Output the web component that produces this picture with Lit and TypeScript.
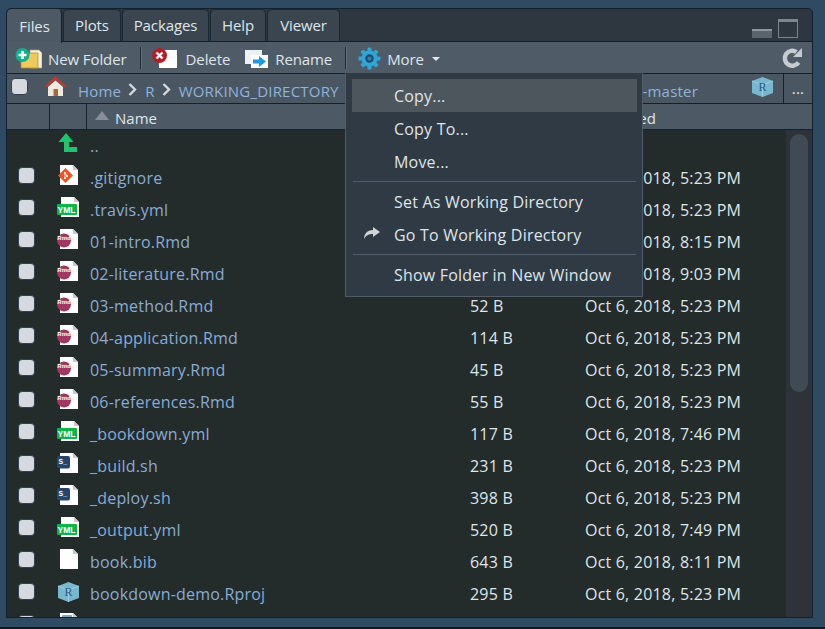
import { html, css, svg, LitElement } from 'lit';
import { customElement } from 'lit/decorators.js';

const sheet = (x: number) =>
  svg`<path d="M${x} 0h13l5 5v15H${x}z" fill="#fff"/><path d="M${x + 13} 0l5 5h-5z" fill="#c6ccd2"/>`;

const rproj = svg`<svg width="24" height="22" viewBox="0 0 24 22"><path d="M12.500 1L23 5v12l-10.500 4L2 17V5z" fill="#79b7cf"/><path d="M2 5l10.500 4L23 5M12.500 9v12" fill="none" stroke="#a5d5e6" stroke-width=".8"/><text x="12.500" y="15" text-anchor="middle" class="ico-text proj">R</text></svg>`;

const icons: Record<string, unknown> = {
  up: svg`<svg width="24" height="22" viewBox="0 0 24 22"><path d="M10 0l7.500 9H13v5h8v5H8V9H2.500z" fill="#21c46f"/></svg>`,
  git: svg`<svg width="24" height="22" viewBox="0 0 24 22">${sheet(4)}<path d="M9.500 3l7.500 7.500-7.500 7.500L2 10.500z" fill="#e9542a"/><circle cx="9" cy="8" r="1.100" fill="#fff"/><circle cx="11" cy="11" r="1.100" fill="#fff"/><circle cx="9" cy="13" r="1.100" fill="#fff"/><path d="M9 8v5M9 8l2 3" stroke="#fff" stroke-width=".8"/></svg>`,
  yml: svg`<svg width="24" height="22" viewBox="0 0 24 22">${sheet(5)}<rect x="1" y="7" width="20" height="11" rx="1" fill="#0fb34a"/><text x="10.500" y="16" text-anchor="middle" class="ico-text yml">YML</text></svg>`,
  rmd: svg`<svg width="24" height="22" viewBox="0 0 24 22">${sheet(4)}<circle cx="8" cy="11.500" r="7" fill="#a03862"/><text x="8" y="10.500" text-anchor="middle" class="ico-text rmd">Rmd</text></svg>`,
  sh: svg`<svg width="24" height="22" viewBox="0 0 24 22">${sheet(4)}<rect x="1" y="3" width="13" height="12.500" rx="2" fill="#26466a"/><text x="2.500" y="10.500" class="ico-text sh">S_</text></svg>`,
  bib: svg`<svg width="24" height="22" viewBox="0 0 24 22">${sheet(4)}</svg>`,
  rproj,
  doc: svg`<svg width="24" height="22" viewBox="0 0 24 22">${sheet(4)}<rect x="6" y="2" width="10" height="8" rx="1" fill="#7ea4c4"/></svg>`,
};

type Row = { name: string; icon: string; size: string; date: string };

const rows: Row[] = [
  { name: '.gitignore', icon: 'git', size: '', date: 'Oct 6, 2018, 5:23 PM' },
  { name: '.travis.yml', icon: 'yml', size: '', date: 'Oct 6, 2018, 5:23 PM' },
  { name: '01-intro.Rmd', icon: 'rmd', size: '', date: 'Oct 6, 2018, 8:15 PM' },
  { name: '02-literature.Rmd', icon: 'rmd', size: '', date: 'Oct 6, 2018, 9:03 PM' },
  { name: '03-method.Rmd', icon: 'rmd', size: '52 B', date: 'Oct 6, 2018, 5:23 PM' },
  { name: '04-application.Rmd', icon: 'rmd', size: '114 B', date: 'Oct 6, 2018, 5:23 PM' },
  { name: '05-summary.Rmd', icon: 'rmd', size: '45 B', date: 'Oct 6, 2018, 5:23 PM' },
  { name: '06-references.Rmd', icon: 'rmd', size: '55 B', date: 'Oct 6, 2018, 5:23 PM' },
  { name: '_bookdown.yml', icon: 'yml', size: '117 B', date: 'Oct 6, 2018, 7:46 PM' },
  { name: '_build.sh', icon: 'sh', size: '231 B', date: 'Oct 6, 2018, 5:23 PM' },
  { name: '_deploy.sh', icon: 'sh', size: '398 B', date: 'Oct 6, 2018, 5:23 PM' },
  { name: '_output.yml', icon: 'yml', size: '520 B', date: 'Oct 6, 2018, 7:49 PM' },
  { name: 'book.bib', icon: 'bib', size: '643 B', date: 'Oct 6, 2018, 8:11 PM' },
  { name: 'bookdown-demo.Rproj', icon: 'rproj', size: '295 B', date: 'Oct 6, 2018, 5:23 PM' },
  { name: '', icon: 'doc', size: '', date: '' },
];

const tooth = [0, 45, 90, 135].map(
  (a) => svg`<rect x="9.500" y="0.500" width="4" height="22" rx="1" fill="#2fa6d6" transform="rotate(${a} 11.500 11.500)"/>`,
);
const gear = svg`<svg width="23" height="23" viewBox="0 0 23 23">${tooth}<circle cx="11.500" cy="11.500" r="8" fill="#2fa6d6"/><circle cx="11.500" cy="11.500" r="4.200" fill="#174f74"/><circle cx="11.500" cy="11.500" r="2" fill="#3d7da3"/></svg>`;

const chevron = html`<svg class="chev" width="9" height="13" viewBox="0 0 9 13"><path d="M1.500 1l5.500 5.500-5.500 5.500" fill="none" stroke="#d3d9de" stroke-width="2.400"/></svg>`;

@customElement('app-root')
export class AppRoot extends LitElement {
  static styles = css`
    :host {
      display: block;
      width: 825px;
      height: 629px;
      overflow: hidden;
      background: #2f4a63;
      font-family: 'Open Sans', 'Noto Sans', sans-serif;
      font-size: 16px;
      letter-spacing: 0.2px;
      color: #dfe5ea;
    }
    .page {
      padding: 8px 12px 9px 6px;
      height: 627px;
      box-sizing: border-box;
    }
    .strip {
      height: 2px;
      background: #0f1a22;
    }
    .panel {
      position: relative;
      height: 100%;
      display: flex;
      flex-direction: column;
      overflow: hidden;
      background: #232b2b;
      border: 1px solid #13202e;
      border-radius: 5px 5px 0 0;
      box-sizing: border-box;
    }
    .tabs {
      display: flex;
      flex: none;
      height: 33px;
      gap: 1px;
      background: #2e3740;
      border-bottom: 1px solid #13202e;
      box-sizing: border-box;
      font-size: 15px;
      letter-spacing: -0.1px;
    }
    .tab {
      display: flex;
      align-items: center;
      justify-content: center;
      background: #3a454f;
      border-radius: 5px 5px 0 0;
      border: 1px solid #1a2734;
      border-bottom: 0;
      box-sizing: border-box;
      height: 32px;
      padding-bottom: 2px;
    }
    .tab.active {
      height: 34px;
      background: #4d5a66;
      border-color: #4d5a66;
      border-right-color: #13202e;
      position: relative;
      z-index: 1;
    }
    .win {
      margin-left: auto;
      display: flex;
      align-items: flex-end;
      gap: 6px;
      padding: 0 14px 3px 0;
    }
    .win .min {
      width: 20px;
      height: 9px;
      background: #59646d;
      border-top: 2px solid #8d969d;
      box-sizing: border-box;
    }
    .win .max {
      width: 20px;
      height: 19px;
      border: 1px solid #7d868e;
      border-top-width: 3px;
      box-sizing: border-box;
    }
    .toolbar {
      flex: none;
      height: 32px;
      display: flex;
      align-items: center;
      background: #4f5c68;
      border-bottom: 1px solid #13202e;
      box-sizing: border-box;
      padding-left: 8px;
      font-size: 15px;
      letter-spacing: -0.1px;
    }
    .tool {
      display: flex;
      align-items: center;
      white-space: nowrap;
      padding-top: 2px;
    }
    .tool svg {
      display: block;
    }
    .tool.folder svg { margin-right: 6px; }
    .tool.del { margin-left: 10px; }
    .tool.del svg { margin-right: 9px; }
    .tool.ren { margin-left: 15px; }
    .tool.ren svg { margin-right: 7px; }
    .tool.more { margin-left: 11px; }
    .tool.more svg { margin-right: 6px; }
    .sep {
      width: 1px;
      height: 22px;
      background: #1c2834;
      border-right: 1px solid #64707b;
      margin-left: 13px;
    }
    .caret {
      width: 0;
      height: 0;
      border: 4px solid transparent;
      border-top: 4px solid #e4e8ec;
      border-bottom: 0;
      margin-left: 8px;
    }
    .refresh {
      margin-left: auto;
      margin-right: 9px;
    }
    .path {
      flex: none;
      height: 30px;
      display: flex;
      align-items: center;
      background: #4a5763;
      border-bottom: 1px solid #13202e;
      box-sizing: border-box;
      padding-left: 4px;
      color: #8fb3dc;
      white-space: nowrap;
      font-size: 15px;
      letter-spacing: 0.2px;
    }
    .path > span {
      padding-top: 4px;
    }
    .path .check {
      padding: 0;
      margin-top: -4px;
    }
    .check {
      width: 17px;
      height: 17px;
      flex: none;
      background: #d5dae0;
      border: 1px solid #33414e;
      border-radius: 4px;
      box-sizing: border-box;
    }
    .home {
      margin: -5px 11px 0 16px;
    }
    .chev {
      margin: 2px 8px 0 7px;
    }
    .last {
      margin-left: auto;
    }
    .proj-end {
      margin-left: 52px;
      display: flex;
      align-items: center;
      height: 100%;
    }
    .proj-end > svg {
      margin-top: -4px;
    }
    .dots {
      border-left: 1px solid #13202e;
      width: 29px;
      height: 100%;
      display: flex;
      align-items: center;
      justify-content: center;
      color: #e8ecef;
      margin-left: 9px;
      padding-bottom: 1px;
      box-sizing: border-box;
    }
    .head {
      flex: none;
      height: 26px;
      display: grid;
      grid-template-columns: 43px 37px 384px 115px 1fr;
      background: #4d5a66;
      border-bottom: 1px solid #13202e;
      box-sizing: border-box;
      font-size: 15px;
      letter-spacing: 0;
    }
    .head > div {
      display: flex;
      align-items: center;
      border-right: 1px solid #13202e;
      box-sizing: border-box;
      padding: 2px 0 0 8px;
    }
    .head > div:last-child {
      border-right: 0;
    }
    .tri {
      width: 0;
      height: 0;
      border: 7px solid transparent;
      border-bottom: 9px solid #868f99;
      border-top: 0;
      margin: -4px 6px 0 0;
    }
    .list {
      flex: 1;
      min-height: 0;
      display: flex;
      overflow: hidden;
    }
    .rows {
      flex: 1;
      min-width: 0;
    }
    .row {
      height: 32px;
      display: grid;
      grid-template-columns: 11px 17px 21px 34px 380px 115px 1fr;
      align-items: center;
    }
    .row .ico {
      grid-column: 4;
      align-self: start;
      margin-top: 3px;
    }
    .row .ico svg {
      display: block;
    }
    .row .check {
      grid-column: 2;
      align-self: start;
      margin-top: 5px;
    }
    .row .name {
      grid-column: 5;
      color: #8aabd3;
      white-space: nowrap;
    }
    .row .size {
      grid-column: 6;
    }
    .row .date {
      grid-column: 7;
      white-space: nowrap;
    }
    .track {
      flex: none;
      width: 26px;
      background: #2d3339;
      padding: 4px 4px 0;
      box-sizing: border-box;
    }
    .thumb {
      height: 258px;
      border-radius: 9px;
      background: #3f4a53;
    }
    .ico-text {
      font-family: 'Liberation Sans', sans-serif;
      font-weight: 700;
      letter-spacing: 0;
      fill: #fff;
    }
    .ico-text.yml { font-size: 8.500px; }
    .ico-text.rmd { font-size: 6px; }
    .ico-text.sh { font-size: 7px; }
    .ico-text.proj {
      font-family: 'Liberation Serif', serif;
      font-weight: 400;
      font-size: 12px;
      fill: #1f5f86;
    }
    .menu {
      position: absolute;
      left: 338px;
      top: 64px;
      width: 298px;
      background: #2f3a44;
      border: 1px solid #4f5d6a;
      border-top-color: #2f3a44;
      box-sizing: border-box;
      padding: 5px 5px 5px 6px;
      z-index: 2;
    }
    .item {
      height: 33px;
      display: flex;
      align-items: center;
      padding-left: 42px;
      position: relative;
    }
    .item.on {
      background: #4e565d;
    }
    .item svg {
      position: absolute;
      left: 11px;
      top: 8px;
    }
    .rule {
      height: 1px;
      background: #4f5d6a;
      margin: 3px 1px;
    }
  `;

  render() {
    return html`
      <div class="page">
        <div class="panel">
          <div class="tabs">
            <div class="tab active" style="width:55px">Files</div>
            <div class="tab" style="width:58px">Plots</div>
            <div class="tab" style="width:87px">Packages</div>
            <div class="tab" style="width:56px">Help</div>
            <div class="tab" style="width:73px">Viewer</div>
            <div class="win"><div class="min"></div><div class="max"></div></div>
          </div>
          <div class="toolbar">
            <div class="tool folder">
              <svg width="27" height="21" viewBox="0 0 27 21"><path d="M15 2h9l3 3v15H15z" fill="#f6f1dc" stroke="#b4a163" stroke-width=".7"/><path d="M6 8h7l2-3h8v15H6z" fill="#efc95a" stroke="#a98a2f" stroke-width=".7"/><circle cx="7.500" cy="7" r="7" fill="#12b08c"/><path d="M7.500 3v8M3.500 7h8" stroke="#fff" stroke-width="2.600"/></svg>
              New Folder
            </div>
            <div class="sep"></div>
            <div class="tool del">
              <svg width="25" height="21" viewBox="0 0 25 21"><path d="M7 2h18v18H7z" fill="#fff"/><circle cx="7.500" cy="7.500" r="7.500" fill="#b0202b"/><path d="M4.500 4.500l6 6M10.500 4.500l-6 6" stroke="#fff" stroke-width="2.400"/></svg>
              Delete
            </div>
            <div class="tool ren">
              <svg width="23" height="21" viewBox="0 0 23 21"><path d="M0 2h17v14H0z" fill="#eef1f3"/><path d="M6 7h17v13H6z" fill="#fff"/><path d="M8 11.500h6V8l7 5.500-7 5.500v-3.500H8z" fill="#1a9be0"/></svg>
              Rename
            </div>
            <div class="sep"></div>
            <div class="tool more">
              ${gear}
              More <span class="caret"></span>
            </div>
            <svg class="refresh" width="22" height="22" viewBox="0 0 22 22"><path d="M17.500 15.500A7.500 7.500 0 1 1 15.500 5" fill="none" stroke="#c5cbd0" stroke-width="4.500"/><path d="M12 10h9V1z" fill="#c5cbd0"/></svg>
          </div>
          <div class="path">
            <span class="check"></span>
            <svg class="home" width="23" height="21" viewBox="0 0 23 21"><path d="M11.500 0L0 11h3L11.500 3.500 20 11h3z" fill="#c8352b"/><path d="M4 11l7.500-6.500L19 11v9H4z" fill="#eee8df"/><rect x="9.500" y="13" width="4.500" height="7" fill="#a66a3a"/></svg>
            <span>Home</span>${chevron}<span>R</span>${chevron}<span>WORKING_DIRECTORY</span>
            <span class="last">bookdown-demo-master</span>
            <div class="proj-end">
              ${rproj}
              <div class="dots">...</div>
            </div>
          </div>
          <div class="head">
            <div></div>
            <div></div>
            <div><span class="tri"></span>Name</div>
            <div>Size</div>
            <div>Modified</div>
          </div>
          <div class="list">
            <div class="rows">
              <div class="row"><span class="ico">${icons.up}</span><span class="name">..</span></div>
              ${rows.map(
                (r) => html`<div class="row">
                  <span class="check"></span>
                  <span class="ico">${icons[r.icon]}</span>
                  <span class="name">${r.name}</span>
                  <span class="size">${r.size}</span>
                  <span class="date">${r.date}</span>
                </div>`,
              )}
            </div>
            <div class="track"><div class="thumb"></div></div>
          </div>
          <div class="menu">
            <div class="item on">Copy...</div>
            <div class="item">Copy To...</div>
            <div class="item">Move...</div>
            <div class="rule"></div>
            <div class="item">Set As Working Directory</div>
            <div class="item">
              <svg width="18" height="14" viewBox="0 0 18 14"><path d="M10 1l7 5-7 5V8C6 8 3 9 1 13 1 8 4 4 10 4z" fill="#cfd4d8"/></svg>
              Go To Working Directory
            </div>
            <div class="rule"></div>
            <div class="item">Show Folder in New Window</div>
          </div>
        </div>
      </div>
      <div class="strip"></div>
    `;
  }
}
